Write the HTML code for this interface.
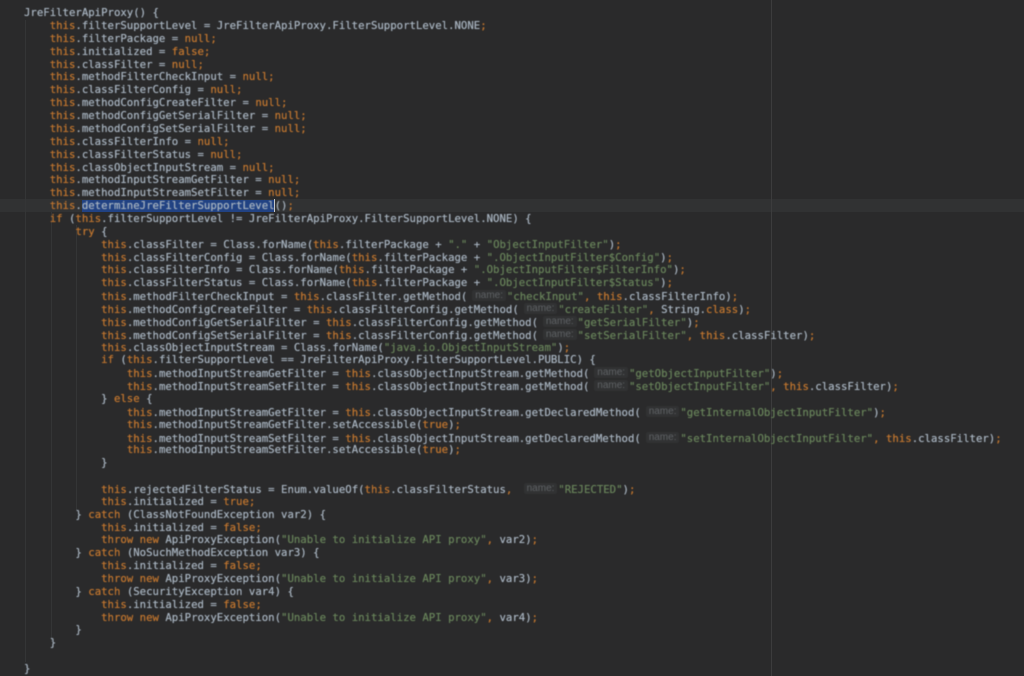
<!DOCTYPE html>
<html>
<head>
<meta charset="utf-8">
<style>
html,body{margin:0;padding:0;width:1024px;height:676px;overflow:hidden;background:#2a2a2b}
#wrap{position:relative;width:1024px;height:676px;overflow:hidden;background:#2a2a2b}
.bar{position:absolute;left:0;width:1024px;top:198.6px;height:13px;background:#313233}
.sel{position:absolute;left:82.2px;width:192px;top:199.5px;height:12.5px;background:#214283}
.caret{position:absolute;left:274px;width:1px;top:199px;height:13px;background:#c4c8cc}
.m{position:absolute;left:771px;top:0;width:1px;height:676px;background:#3c3c3d}
.g{position:absolute;width:1px;background:#343536}
#code{position:absolute;left:24px;top:7.2px;margin:0;font:10.68px/12.86px "DejaVu Sans Mono","Liberation Mono",monospace;color:#a8b4c0;filter:blur(.4px);text-shadow:0 0 .5px currentColor}
#code div{height:12.86px;white-space:pre}
b{font-weight:normal;color:#c1762f}
i{font-style:normal;color:#68835a}
u{text-decoration:none;display:inline-block;width:33.5px;margin:0 1px 0 5px;height:11px;vertical-align:-1px;overflow:hidden;text-align:center;font:10px/11px "Liberation Sans",sans-serif;color:#5f6265;background:#313233;border-radius:2px;text-shadow:none}
</style>
</head>
<body>
<div id="wrap">
<div class="bar"></div>
<div class="sel"></div>
<div class="caret"></div>
<div class="m"></div>
<div class="g" style="left:25px;top:20px;height:642px"></div>
<div class="g" style="left:51px;top:212px;height:430px"></div>
<div class="g" style="left:76px;top:225px;height:285px"></div>
<div id="code">
<div>JreFilterApiProxy() {</div>
<div>    <b>this</b>.filterSupportLevel = JreFilterApiProxy.FilterSupportLevel.NONE<b>;</b></div>
<div>    <b>this</b>.filterPackage = <b>null;</b></div>
<div>    <b>this</b>.initialized = <b>false;</b></div>
<div>    <b>this</b>.classFilter = <b>null;</b></div>
<div>    <b>this</b>.methodFilterCheckInput = <b>null;</b></div>
<div>    <b>this</b>.classFilterConfig = <b>null;</b></div>
<div>    <b>this</b>.methodConfigCreateFilter = <b>null;</b></div>
<div>    <b>this</b>.methodConfigGetSerialFilter = <b>null;</b></div>
<div>    <b>this</b>.methodConfigSetSerialFilter = <b>null;</b></div>
<div>    <b>this</b>.classFilterInfo = <b>null;</b></div>
<div>    <b>this</b>.classFilterStatus = <b>null;</b></div>
<div>    <b>this</b>.classObjectInputStream = <b>null;</b></div>
<div>    <b>this</b>.methodInputStreamGetFilter = <b>null;</b></div>
<div>    <b>this</b>.methodInputStreamSetFilter = <b>null;</b></div>
<div>    <b>this</b>.determineJreFilterSupportLevel()<b>;</b></div>
<div>    <b>if</b> (<b>this</b>.filterSupportLevel != JreFilterApiProxy.FilterSupportLevel.NONE) {</div>
<div>        <b>try</b> {</div>
<div>            <b>this</b>.classFilter = Class.forName(<b>this</b>.filterPackage + <i>"."</i> + <i>"ObjectInputFilter"</i>)<b>;</b></div>
<div>            <b>this</b>.classFilterConfig = Class.forName(<b>this</b>.filterPackage + <i>".ObjectInputFilter$Config"</i>)<b>;</b></div>
<div>            <b>this</b>.classFilterInfo = Class.forName(<b>this</b>.filterPackage + <i>".ObjectInputFilter$FilterInfo"</i>)<b>;</b></div>
<div>            <b>this</b>.classFilterStatus = Class.forName(<b>this</b>.filterPackage + <i>".ObjectInputFilter$Status"</i>)<b>;</b></div>
<div>            <b>this</b>.methodFilterCheckInput = <b>this</b>.classFilter.getMethod(<u>name:</u><i>"checkInput"</i><b>,</b> <b>this</b>.classFilterInfo)<b>;</b></div>
<div>            <b>this</b>.methodConfigCreateFilter = <b>this</b>.classFilterConfig.getMethod(<u>name:</u><i>"createFilter"</i><b>,</b> String.<b>class</b>)<b>;</b></div>
<div>            <b>this</b>.methodConfigGetSerialFilter = <b>this</b>.classFilterConfig.getMethod(<u>name:</u><i>"getSerialFilter"</i>)<b>;</b></div>
<div>            <b>this</b>.methodConfigSetSerialFilter = <b>this</b>.classFilterConfig.getMethod(<u>name:</u><i>"setSerialFilter"</i><b>,</b> <b>this</b>.classFilter)<b>;</b></div>
<div>            <b>this</b>.classObjectInputStream = Class.forName(<i>"java.io.ObjectInputStream"</i>)<b>;</b></div>
<div>            <b>if</b> (<b>this</b>.filterSupportLevel == JreFilterApiProxy.FilterSupportLevel.PUBLIC) {</div>
<div>                <b>this</b>.methodInputStreamGetFilter = <b>this</b>.classObjectInputStream.getMethod(<u>name:</u><i>"getObjectInputFilter"</i>)<b>;</b></div>
<div>                <b>this</b>.methodInputStreamSetFilter = <b>this</b>.classObjectInputStream.getMethod(<u>name:</u><i>"setObjectInputFilter"</i><b>,</b> <b>this</b>.classFilter)<b>;</b></div>
<div>            } <b>else</b> {</div>
<div>                <b>this</b>.methodInputStreamGetFilter = <b>this</b>.classObjectInputStream.getDeclaredMethod(<u>name:</u><i>"getInternalObjectInputFilter"</i>)<b>;</b></div>
<div>                <b>this</b>.methodInputStreamGetFilter.setAccessible(<b>true</b>)<b>;</b></div>
<div>                <b>this</b>.methodInputStreamSetFilter = <b>this</b>.classObjectInputStream.getDeclaredMethod(<u>name:</u><i>"setInternalObjectInputFilter"</i><b>,</b> <b>this</b>.classFilter)<b>;</b></div>
<div>                <b>this</b>.methodInputStreamSetFilter.setAccessible(<b>true</b>)<b>;</b></div>
<div>            }</div>
<div> </div>
<div>            <b>this</b>.rejectedFilterStatus = Enum.valueOf(<b>this</b>.classFilterStatus<b>,</b> <u>name:</u><i>"REJECTED"</i>)<b>;</b></div>
<div>            <b>this</b>.initialized = <b>true;</b></div>
<div>        } <b>catch</b> (ClassNotFoundException var2) {</div>
<div>            <b>this</b>.initialized = <b>false;</b></div>
<div>            <b>throw new</b> ApiProxyException(<i>"Unable to initialize API proxy"</i><b>,</b> var2)<b>;</b></div>
<div>        } <b>catch</b> (NoSuchMethodException var3) {</div>
<div>            <b>this</b>.initialized = <b>false;</b></div>
<div>            <b>throw new</b> ApiProxyException(<i>"Unable to initialize API proxy"</i><b>,</b> var3)<b>;</b></div>
<div>        } <b>catch</b> (SecurityException var4) {</div>
<div>            <b>this</b>.initialized = <b>false;</b></div>
<div>            <b>throw new</b> ApiProxyException(<i>"Unable to initialize API proxy"</i><b>,</b> var4)<b>;</b></div>
<div>        }</div>
<div>    }</div>
<div> </div>
<div>}</div>
</div>
</div>
</body>
</html>
